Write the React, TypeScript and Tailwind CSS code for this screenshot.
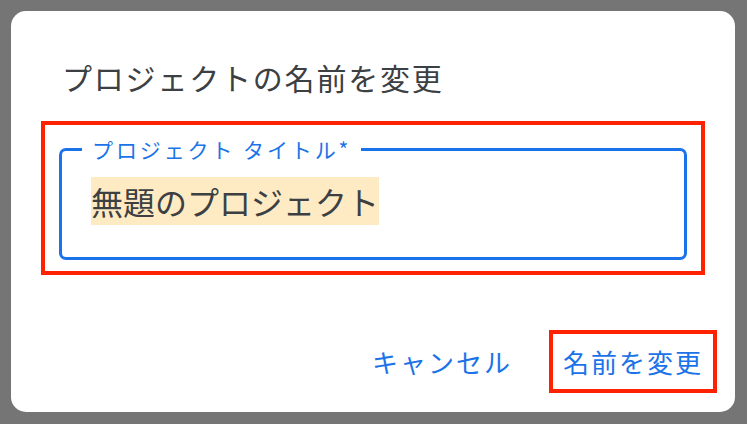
import React from 'react';

const jp = { fontFamily: '"Noto Sans CJK JP", "Noto Sans", sans-serif' };

export default function App() {
  return (
    <div className="w-[747px] h-[424px] bg-[#757575] p-[11px]" style={jp}>
      <div className="w-[724px] h-[401px] bg-white rounded-[15px] flex flex-col">
        <h1 className="pt-[48px] pl-[51px] text-[30px] leading-[36px] tracking-[1.8px] text-[#3c4043] font-normal">
          プロジェクトの名前を変更
        </h1>

        <div className="mt-[26px] mx-[30px] h-[154px] border-4 border-[#ff2200] px-[14px] pt-[12px]">
          <fieldset className="h-[123px] border-[3px] border-[#1a73e8] rounded-[7px]">
            <legend className="ml-[20px] px-[10px] text-[21px] leading-[24px] tracking-[2.9px] text-[#1a73e8]">
              プロジェクト タイトル*
            </legend>
            <div className="mt-[16px] pl-[29px]">
              <span className="bg-[#feebc3] text-[32px] leading-[48px] text-[#3c4043] inline-block">
                無題のプロジェクト
              </span>
            </div>
          </fieldset>
        </div>

        <div className="mt-auto mb-[19px] mr-[18px] flex justify-end items-center gap-[23px]">
          <button className="px-[14px] text-[26px] leading-[55px] tracking-[2px] text-[#1a73e8]">
            キャンセル
          </button>
          <button className="border-4 border-[#ff2200] px-[10px] text-[26px] leading-[55px] tracking-[2px] text-[#1a73e8]">
            名前を変更
          </button>
        </div>
      </div>
    </div>
  );
}
